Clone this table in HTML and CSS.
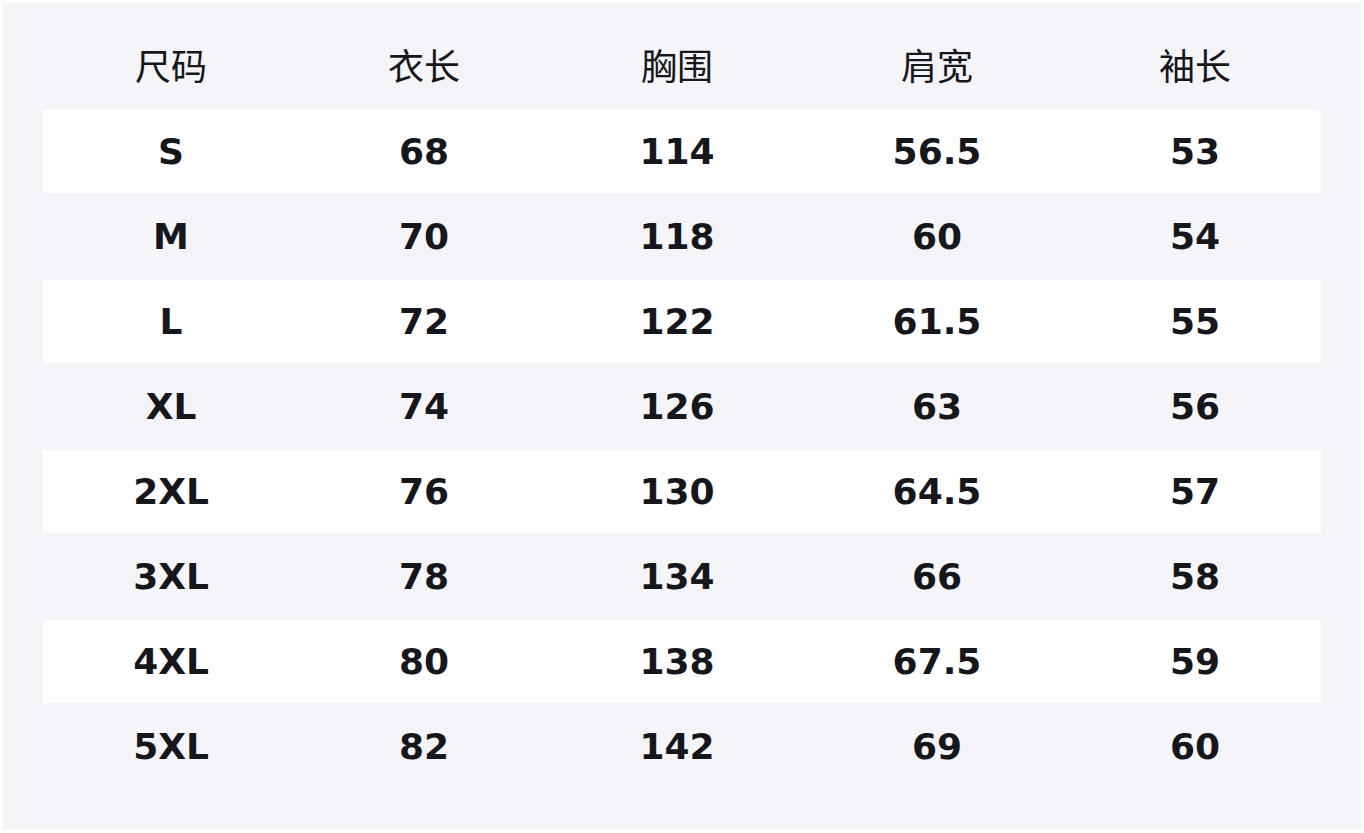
FILE: index.html
```html
<!DOCTYPE html>
<html lang="zh">
<head>
<meta charset="utf-8">
<title>尺码表</title>
<link rel="stylesheet" href="styles.css">
</head>
<body>
<div class="panel">
  <div class="row head">
    <div class="cell">尺码</div><div class="cell">衣长</div><div class="cell">胸围</div><div class="cell">肩宽</div><div class="cell">袖长</div>
  </div>
  <div class="row odd"><div class="cell">S</div><div class="cell">68</div><div class="cell">114</div><div class="cell">56.5</div><div class="cell">53</div></div>
  <div class="row"><div class="cell">M</div><div class="cell">70</div><div class="cell">118</div><div class="cell">60</div><div class="cell">54</div></div>
  <div class="row odd"><div class="cell">L</div><div class="cell">72</div><div class="cell">122</div><div class="cell">61.5</div><div class="cell">55</div></div>
  <div class="row"><div class="cell">XL</div><div class="cell">74</div><div class="cell">126</div><div class="cell">63</div><div class="cell">56</div></div>
  <div class="row odd"><div class="cell">2XL</div><div class="cell">76</div><div class="cell">130</div><div class="cell">64.5</div><div class="cell">57</div></div>
  <div class="row"><div class="cell">3XL</div><div class="cell">78</div><div class="cell">134</div><div class="cell">66</div><div class="cell">58</div></div>
  <div class="row odd"><div class="cell">4XL</div><div class="cell">80</div><div class="cell">138</div><div class="cell">67.5</div><div class="cell">59</div></div>
  <div class="row"><div class="cell">5XL</div><div class="cell">82</div><div class="cell">142</div><div class="cell">69</div><div class="cell">60</div></div>
</div>
</body>
</html>
```
FILE: styles.css
```css
html, body {
  margin: 0;
  padding: 0;
  background: #ffffff;
}
body {
  padding: 3px;
}
.panel {
  width: 1358px;
  height: 827px;
  box-sizing: border-box;
  background: #f4f4f9;
  padding: 0 40px 40px;
  color: #16161d;
}
.row {
  display: grid;
  grid-template-columns: 256px 250px 256px 264px 252px;
  height: 83px;
  margin-bottom: 2px;
  align-items: center;
  font-family: "DejaVu Sans", "Noto Sans CJK SC", sans-serif;
  font-weight: bold;
  font-size: 36px;
  line-height: 48px;
}
.row.odd {
  background: #ffffff;
}
.row.head {
  height: auto;
  margin: 0;
  padding: 37px 0 22px;
  font-family: "Noto Sans CJK SC", "Noto Sans", sans-serif;
  font-weight: normal;
  font-size: 36px;
  line-height: 48px;
}
.cell {
  text-align: center;
}
```
